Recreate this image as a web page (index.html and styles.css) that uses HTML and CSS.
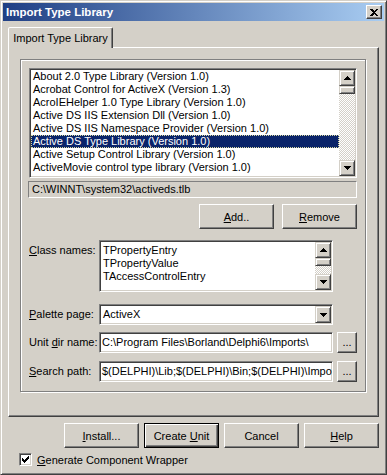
FILE: index.html
```html
<!DOCTYPE html>
<html>
  <head>
    <title>Import Type Library</title>
    <link rel="stylesheet" href="styles.css">
  </head>

  <body>
    <div class="window">
      <div class="titlebar">
        <span class="title">Import Type Library</span>
        <span class="close-btn">
          <svg width="8" height="7" viewBox="0 0 8 7" shape-rendering="crispEdges"><path d="M0 0h2l2 2 2-2h2L5 3.5 8 7H6L4 5 2 7H0l3-3.5z" fill="#000"/></svg>
        </span>
      </div>

      <div class="client">
        <div class="tab">Import Type Library</div>
        <div class="tab-panel">
          <div class="group">
            <div class="listbox">
              <ul class="items">
                <li>About 2.0 Type Library (Version 1.0)</li>
                <li>Acrobat Control for ActiveX (Version 1.3)</li>
                <li>AcroIEHelper 1.0 Type Library (Version 1.0)</li>
                <li>Active DS IIS Extension Dll (Version 1.0)</li>
                <li>Active DS IIS Namespace Provider (Version 1.0)</li>
                <li class="selected"><span>Active DS Type Library (Version 1.0)</span></li>
                <li>Active Setup Control Library (Version 1.0)</li>
                <li>ActiveMovie control type library (Version 1.0)</li>
                <li>ActiveX Conference Control (Version 1.0)</li>
              </ul>
              <div class="vscroll">
                <div class="sb-btn"><svg width="7" height="4" viewBox="0 0 7 4" shape-rendering="crispEdges"><path d="M3 0h1v1h1v1h1v1h1v1H0V3h1V2h1V1h1z"/></svg></div>
                <div class="sb-thumb"></div>
                <div class="sb-track"></div>
                <div class="sb-btn"><svg width="7" height="4" viewBox="0 0 7 4" shape-rendering="crispEdges"><path d="M0 0h7v1H6v1H5v1H4v1H3V3H2V2H1V1H0z"/></svg></div>
              </div>
            </div>

            <div class="path-field">C:\WINNT\system32\activeds.tlb</div>

            <div class="btn-row">
              <button class="btn"><u>A</u>dd..</button>
              <button class="btn"><u>R</u>emove</button>
            </div>

            <div class="field-row memo-row">
              <label class="field-label"><u>C</u>lass names:</label>
              <div class="memo">
                <div class="memo-lines">
                  <div>TPropertyEntry</div>
                  <div>TPropertyValue</div>
                  <div>TAccessControlEntry</div>
                </div>
                <div class="vscroll">
                  <div class="sb-btn"><svg width="7" height="4" viewBox="0 0 7 4" shape-rendering="crispEdges"><path d="M3 0h1v1h1v1h1v1h1v1H0V3h1V2h1V1h1z"/></svg></div>
                  <div class="sb-thumb"></div>
                  <div class="sb-track"></div>
                  <div class="sb-btn"><svg width="7" height="4" viewBox="0 0 7 4" shape-rendering="crispEdges"><path d="M0 0h7v1H6v1H5v1H4v1H3V3H2V2H1V1H0z"/></svg></div>
                </div>
              </div>
            </div>

            <div class="field-row combo-row">
              <label class="field-label"><u>P</u>alette page:</label>
              <div class="combo">
                <span class="combo-text">ActiveX</span>
                <span class="combo-btn"><svg width="7" height="4" viewBox="0 0 7 4" shape-rendering="crispEdges"><path d="M0 0h7v1H6v1H5v1H4v1H3V3H2V2H1V1H0z"/></svg></span>
              </div>
            </div>

            <div class="field-row edit-row">
              <label class="field-label">Unit <u>d</u>ir name:</label>
              <div class="edit">C:\Program Files\Borland\Delphi6\Imports\</div>
              <button class="btn dots">...</button>
            </div>

            <div class="field-row edit-row">
              <label class="field-label"><u>S</u>earch path:</label>
              <div class="edit">$(DELPHI)\Lib;$(DELPHI)\Bin;$(DELPHI)\Imports;$(DELPHI)\Projects\Bpl</div>
              <button class="btn dots">...</button>
            </div>
          </div>
        </div>

        <div class="dialog-buttons">
          <button class="btn"><u>I</u>nstall...</button>
          <button class="btn default">Create <u>U</u>nit</button>
          <button class="btn">Cancel</button>
          <button class="btn"><u>H</u>elp</button>
        </div>

        <div class="check-row">
          <span class="checkbox">
            <svg width="7" height="7" viewBox="0 0 7 7" shape-rendering="crispEdges"><path d="M6 0h1v3H6v1H5v1H4v1H3v1H2V6H1V5H0V2h1v1h1v1h1V3h1V2h1V1h1z"/></svg>
          </span>
          <span><u>G</u>enerate Component Wrapper</span>
        </div>
      </div>
    </div>
  </body>
</html>
```

FILE: styles.css
```css
body {
  margin: 0;
  background-color: #d4d0c8;
  color: #000;
  font-family: "Liberation Sans", Arial, sans-serif;
  font-size: 11px;
}

.window {
  width: 387px;
  height: 475px;
  box-sizing: border-box;
  padding: 2px;
  background-color: #d4d0c8;
  border: 1px solid;
  border-color: #d4d0c8 #404040 #404040 #d4d0c8;
  box-shadow: inset 1px 1px #fff, inset -1px -1px #808080;
}

.titlebar {
  height: 18px;
  display: flex;
  align-items: center;
  justify-content: space-between;
  padding: 0 2px 0 3px;
  background: linear-gradient(to right, #1f3f84, #a9cdf2);
  color: #fff;
  font-weight: bold;
  font-size: 11.5px;
}

.close-btn {
  width: 16px;
  height: 14px;
  box-sizing: border-box;
  display: flex;
  align-items: center;
  justify-content: center;
  background-color: #d4d0c8;
  border: 1px solid;
  border-color: #fff #404040 #404040 #fff;
  box-shadow: inset -1px -1px #808080;
}

.client {
  padding: 6px 5px 0;
}

/* tab header sits over the panel's top edge */
.tab {
  position: relative;
  z-index: 1;
  width: 105px;
  height: 21px;
  margin-bottom: -1px;
  box-sizing: border-box;
  display: flex;
  align-items: center;
  justify-content: center;
  padding-bottom: 1px;
  background-color: #d4d0c8;
  border: 1px solid;
  border-bottom: none;
  border-color: #fff #404040 transparent #fff;
  border-radius: 2px 2px 0 0;
  box-shadow: inset -1px 0 #808080;
}

.tab-panel {
  height: 370px;
  box-sizing: border-box;
  padding: 11px 0 0 11px;
  border: 1px solid;
  border-color: #fff #404040 #404040 #fff;
  box-shadow: inset -1px -1px #808080;
}

.group {
  width: 346px;
  height: 333px;
  box-sizing: border-box;
  padding: 8px 0 0 8px;
  border: 1px solid #808080;
  box-shadow: 1px 1px 0 #fff, inset 1px 1px 0 #fff;
}

/* sunken controls */
.listbox,
.memo,
.combo,
.edit {
  box-sizing: border-box;
  background-color: #fff;
  border: 1px solid;
  border-color: #808080 #fff #fff #808080;
  box-shadow: inset 1px 1px #404040, inset -1px -1px #d4d0c8;
  padding: 1px;
}

.listbox {
  width: 328px;
  height: 110px;
  display: flex;
}

.items {
  flex: 1;
  margin: 0;
  padding: 0;
  list-style: none;
  overflow: hidden;
}

.items li {
  height: 13px;
  line-height: 13px;
  padding-left: 2px;
  white-space: nowrap;
}

.items li.selected {
  background-color: #0a246a;
  color: #fff;
  outline: 1px dotted #d8d8a0;
  outline-offset: -1px;
}

.vscroll {
  width: 16px;
  display: flex;
  flex-direction: column;
  background: repeating-conic-gradient(#fff 0 25%, #d4d0c8 0 50%) 0 0 / 2px 2px;
}

.sb-btn,
.sb-thumb,
.combo-btn {
  box-sizing: border-box;
  background-color: #d4d0c8;
  border: 1px solid;
  border-color: #d4d0c8 #404040 #404040 #d4d0c8;
  box-shadow: inset 1px 1px #fff, inset -1px -1px #808080;
}

.sb-btn {
  height: 16px;
  display: flex;
  align-items: center;
  justify-content: center;
}

.sb-thumb {
  height: 8px;
}

.sb-track {
  flex: 1;
}

.path-field {
  width: 329px;
  height: 17px;
  margin: 3px 0 0 -1px;
  box-sizing: border-box;
  padding-left: 3px;
  line-height: 15px;
  border: 1px solid;
  border-color: #808080 #fff #fff #808080;
}

.btn {
  width: 75px;
  height: 25px;
  box-sizing: border-box;
  padding: 0;
  background-color: #d4d0c8;
  color: #000;
  font: inherit;
  border: 1px solid;
  border-color: #fff #404040 #404040 #fff;
  box-shadow: inset -1px -1px #808080;
}

.btn.default {
  border-color: #000;
  box-shadow: inset 1px 1px #fff, inset -1px -1px #404040, inset -2px -2px #808080;
}

.btn-row {
  width: 328px;
  display: flex;
  justify-content: flex-end;
  gap: 8px;
  margin-top: 6px;
}

.field-row {
  display: flex;
  align-items: flex-start;
}

.field-label {
  width: 70px;
  flex-shrink: 0;
  padding-top: 4px;
}

.memo-row {
  margin-top: 11px;
}

.memo {
  width: 234px;
  height: 52px;
  display: flex;
}

.memo-lines {
  flex: 1;
  padding: 2px 0 0 2px;
  line-height: 13px;
}

.combo-row {
  margin-top: 12px;
}

.combo {
  width: 234px;
  height: 21px;
  display: flex;
}

.combo-text {
  flex: 1;
  padding-left: 2px;
  line-height: 17px;
}

.combo-btn {
  width: 16px;
  display: flex;
  align-items: center;
  justify-content: center;
}

.edit-row {
  margin-top: 7px;
}

.edit-row + .edit-row {
  margin-top: 8px;
}

.edit {
  width: 234px;
  height: 21px;
  padding-left: 2px;
  line-height: 17px;
  white-space: nowrap;
  overflow: hidden;
}

.btn.dots {
  width: 20px;
  height: 21px;
  margin-left: 4px;
  line-height: 19px;
}

.dialog-buttons {
  display: flex;
  justify-content: flex-end;
  gap: 5px;
  margin-top: 6px;
}

.check-row {
  display: flex;
  align-items: center;
  gap: 5px;
  margin: 5px 0 0 11px;
}

.checkbox {
  width: 13px;
  height: 13px;
  box-sizing: border-box;
  display: flex;
  align-items: center;
  justify-content: center;
  background-color: #fff;
  border: 1px solid;
  border-color: #808080 #fff #fff #808080;
  box-shadow: inset 1px 1px #404040, inset -1px -1px #d4d0c8;
}
```
